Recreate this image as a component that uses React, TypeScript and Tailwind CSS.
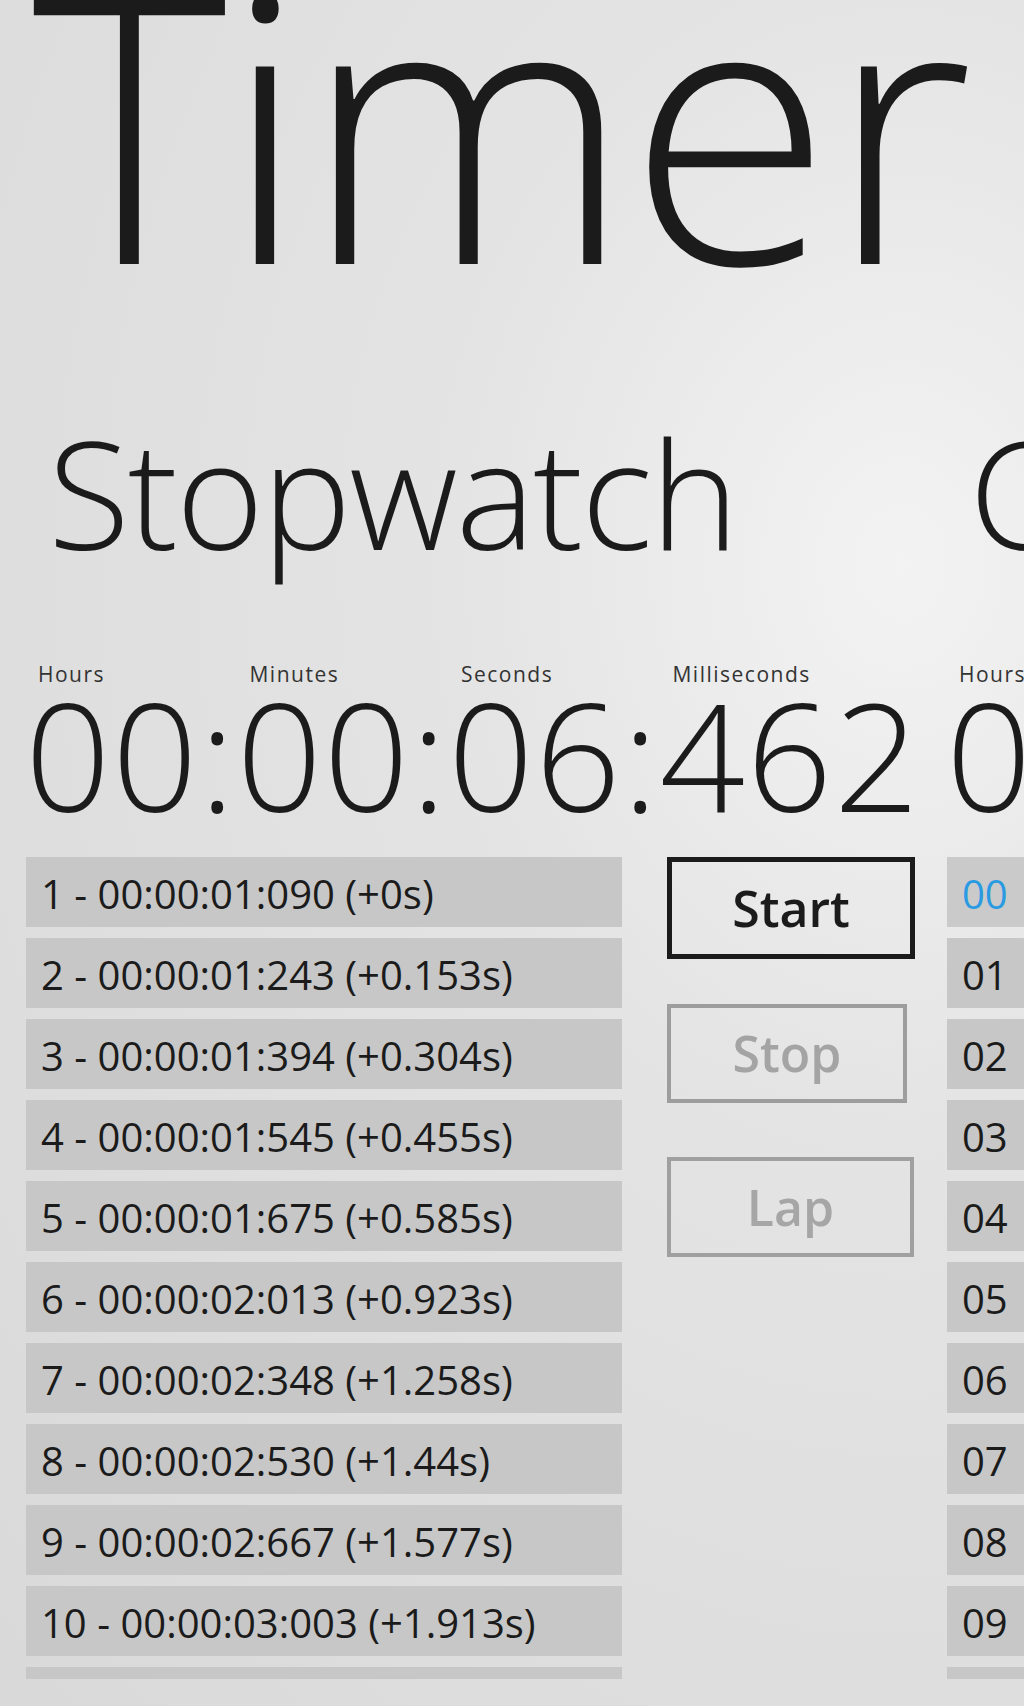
const laps = [
  '1 - 00:00:01:090 (+0s)',
  '2 - 00:00:01:243 (+0.153s)',
  '3 - 00:00:01:394 (+0.304s)',
  '4 - 00:00:01:545 (+0.455s)',
  '5 - 00:00:01:675 (+0.585s)',
  '6 - 00:00:02:013 (+0.923s)',
  '7 - 00:00:02:348 (+1.258s)',
  '8 - 00:00:02:530 (+1.44s)',
  '9 - 00:00:02:667 (+1.577s)',
  '10 - 00:00:03:003 (+1.913s)',
  '',
];

const hours = ['00', '01', '02', '03', '04', '05', '06', '07', '08', '09', '10'];

function TimeDisplay({ parts }: { parts: { label: string; value: string }[] }) {
  return (
    <div className="flex -ml-[1px] mt-[97px]">
      {parts.map((p) => (
        <div key={p.label} className="flex flex-col shrink-0">
          <span className="pl-[13px] text-[21px] leading-[21px] tracking-[1.5px] text-[#333]">{p.label}</span>
          <span className="mt-[4px] text-[150px] leading-[130px] tracking-[1.5px] font-light whitespace-nowrap">
            {p.value}
          </span>
        </div>
      ))}
    </div>
  );
}

export default function App() {
  return (
    <div className="w-[1024px] h-[1706px] overflow-hidden bg-[radial-gradient(ellipse_at_88%_33%,#f3f3f3_0%,#e4e4e4_35%,#d9d9d9_100%)] font-['Open_Sans',sans-serif] text-[#1b1b1b]">
      <h1 className="-mt-[66px] pl-[32px] text-[372px] leading-[372px] tracking-[-4px] font-light whitespace-nowrap">
        Timer
      </h1>

      <div className="flex pl-[26px]">
        {/* stopwatch */}
        <section className="w-[921px] shrink-0">
          <h2 className="mt-[111px] pl-[22px] text-[150px] leading-[150px] tracking-[-2px] font-light">Stopwatch</h2>
          <TimeDisplay
            parts={[
              { label: 'Hours', value: '00:' },
              { label: 'Minutes', value: '00:' },
              { label: 'Seconds', value: '06:' },
              { label: 'Milliseconds', value: '462' },
            ]}
          />
          <div className="flex mt-[38px]">
            <div className="w-[596px] h-[822px] overflow-hidden flex flex-col gap-[11px]">
              {laps.map((l, i) => (
                <div
                  key={i}
                  className="h-[70px] shrink-0 bg-[#c7c7c7] flex items-center pl-[15px] pt-[4px] text-[40px] whitespace-nowrap"
                >
                  {l}
                </div>
              ))}
            </div>
            <div className="ml-[45px] flex flex-col">
              <button className="w-[248px] h-[102px] border-[5px] border-[#1b1b1b] text-[50px] font-semibold text-[#1b1b1b]">
                Start
              </button>
              <button className="mt-[45px] w-[240px] h-[99px] border-[4px] border-[#9d9d9d] text-[50px] font-semibold text-[#a4a4a4]">
                Stop
              </button>
              <button className="mt-[54px] w-[247px] h-[100px] border-[4px] border-[#a0a0a0] text-[50px] font-semibold text-[#a6a6a6]">
                Lap
              </button>
            </div>
          </div>
        </section>

        {/* countdown */}
        <section className="w-[600px] shrink-0">
          <h2 className="mt-[111px] pl-[22px] text-[150px] leading-[150px] tracking-[-2px] font-light whitespace-nowrap">
            Countdown
          </h2>
          <TimeDisplay
            parts={[
              { label: 'Hours', value: '00:' },
              { label: 'Minutes', value: '00:' },
              { label: 'Seconds', value: '00:' },
            ]}
          />
          <div className="mt-[38px] w-[180px] h-[822px] overflow-hidden flex flex-col gap-[11px]">
            {hours.map((h, i) => (
              <div
                key={h}
                className={
                  i === 0
                    ? 'h-[70px] shrink-0 bg-[#cacaca] flex items-center pl-[15px] pt-[4px] text-[40px] text-[#2a9be3]'
                    : 'h-[70px] shrink-0 bg-[#c7c7c7] flex items-center pl-[15px] pt-[4px] text-[40px]'
                }
              >
                {h}
              </div>
            ))}
          </div>
        </section>
      </div>
    </div>
  );
}
